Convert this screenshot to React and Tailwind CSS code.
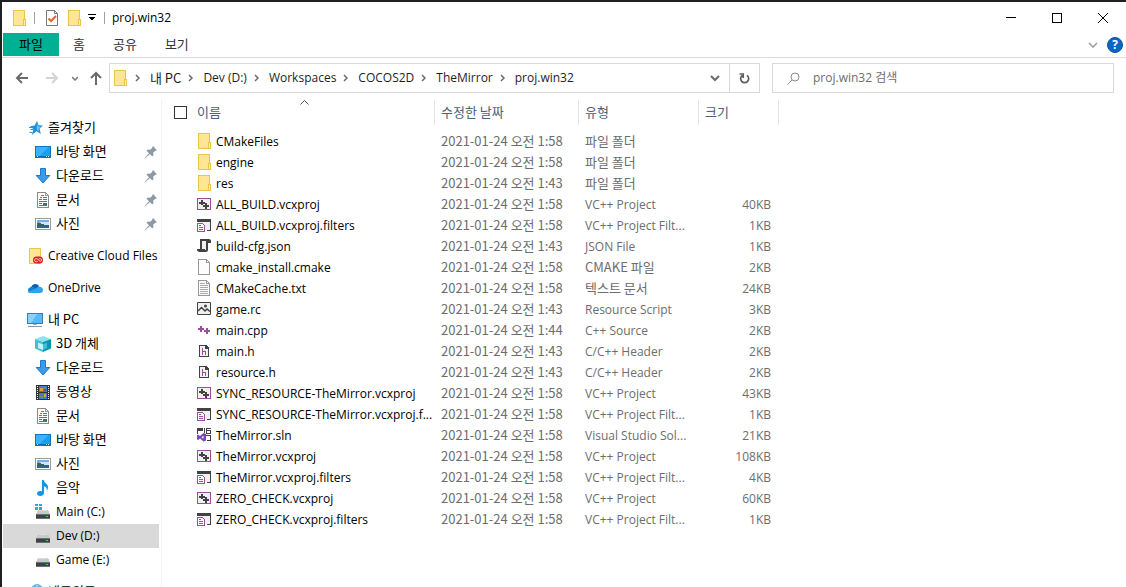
import { clsx } from "clsx";

const latin = "font-['Open_Sans','Noto_Sans_CJK_KR',sans-serif] text-xs";
const hangul = "font-['Noto_Sans_CJK_KR',sans-serif] text-[13px]";

const isHangul = (text) => /[가-힣]/.test(text);

// Korean labels are set one pixel larger than latin ones
const textFont = (text) => (isHangul(text) ? hangul : latin);

const Icon = ({ children, crisp = true, className = "size-4" }) => (
    <svg
        viewBox="0 0 16 16"
        fill="none"
        shapeRendering={crisp ? "crispEdges" : "auto"}
        className={clsx("shrink-0", className)}
        aria-hidden="true"
    >
        {children}
    </svg>
);

const Folder = () => (
    <Icon>
        <path fill="#ffe594" stroke="#e9c54a" d="M1.5.5h11v15h-11z" />
        <path fill="#ffeeb5" stroke="#e9c54a" d="M11.5 9.5h2v6h-2z" />
    </Icon>
);

const Star = () => (
    <Icon crisp={false}>
        <path fill="#1f8fe0" d="M10 1l1.600 4.300 4.400.2-3.400 3 1.200 5.500-4.200-2.700L4.800 15l1.700-5.700L3 6.200l4.700-.7z" />
        <path fill="#7cc4f5" d="M10 3.500l1 3 3 .2-2.400 1.700.7 2.800-2.500-1.600z" />
        <path stroke="#2b96e2" d="M2 7.500h4M3.500 9.500h3M2.500 12.500h3" />
    </Icon>
);

const Desktop = () => (
    <Icon>
        <path fill="#19a0f5" stroke="#0d74be" d="M.5 2.500h15v11H.5z" />
        <path fill="#3db1fb" d="M1 3h12L4 12H1z" />
        <path fill="#0b6fb8" d="M1 12h14v1H1z" />
        <path fill="#fff" d="M2 12h1v1H2zM11 12h1v1h-1zM13 12h1v1h-1z" />
    </Icon>
);

const Download = () => (
    <Icon crisp={false}>
        <path fill="#3b9be9" stroke="#2477c0" d="M5.500.5h5v7h4.300L8 15 1.200 7.500h4.300z" />
    </Icon>
);

const Document = () => (
    <Icon>
        <path fill="#fff" stroke="#8a8a8a" d="M2.500.5h8l3 3v12h-11z" />
        <path stroke="#9a9a9a" d="M10.500 1v2.500H13" />
        <path stroke="#2c7fc0" d="M6 3.500h3M5 5.500h2M8 5.500h4M4 7.500h3M8 7.500h4M4 9.500h8M4 11.500h3M4 13.500h8" />
        <path fill="#2f7d5b" d="M8 11h4v2H8z" />
    </Icon>
);

const Pictures = () => (
    <Icon>
        <path fill="#fff" stroke="#9b9b9b" d="M.5 2.500h15v11H.5z" />
        <path fill="#6cb4ea" d="M2 4h12v4H2z" />
        <path fill="#cfe6f6" d="M5 6h9v3H5z" />
        <path fill="#35664f" d="M2 7h4v1h3v1h5v1H2z" />
        <path fill="#27698f" d="M2 10h12v2H2z" />
    </Icon>
);

const CreativeCloud = () => (
    <Icon crisp={false}>
        <path fill="#ffe594" stroke="#e9c54a" d="M2.500.5h11v15h-11z" />
        <rect x="6" y="8.500" width="10" height="7" rx="3.500" fill="#da1f26" />
        <path stroke="#ffd9c7" d="M10.800 13.200c-1 1-3.200.8-3.200-.9s2-2.200 3.200-1l1.800 1.600c1 .8 2.200.2 2-.9-.2-1.400-2-1.800-3-.7" />
    </Icon>
);

const OneDrive = () => (
    <Icon crisp={false}>
        <path fill="#0f5fb4" d="M4 7.500a4.400 4.400 0 018-1.600l-2 3.600-6 1z" />
        <path fill="#1180d6" d="M3.400 7.200c1.600-.8 3-.4 4.200.3L12 13H3.300A2.950 2.950 0 013.400 7.200z" />
        <path fill="#2aa5ee" d="M11 6.800c3-.7 5 .9 5 3.200S14.600 13 13 13H3c-1 0-2-.5-2.400-1.200L8 9z" />
    </Icon>
);

const Computer = () => (
    <Icon>
        <path fill="#55baf8" stroke="#3f7ca8" d="M.5 1.500h15v10H.5z" />
        <path fill="#88d2fc" d="M1 2h9l-6 9H1z" />
        <path fill="#9eb2c0" d="M6 12h4v1H6z" />
        <path fill="#8495a3" d="M1 14h14v1H1z" />
    </Icon>
);

const Cube = () => (
    <Icon crisp={false}>
        <path fill="#8fe3ec" d="M8 0l8 3-8 3-8-3z" />
        <path fill="#3fc1d3" d="M0 3l8 3v10l-8-3.500z" />
        <path fill="#0e93b5" d="M16 3L8 6v10l8-3.500z" />
        <path fill="#c3f3f6" d="M3 6.500l5 2V14l-5-2z" />
        <path fill="#35c5dc" d="M8 8.500l4-2V12l-4 2z" />
    </Icon>
);

const Video = () => (
    <Icon>
        <path fill="#333" d="M1 1h14v15H1z" />
        <path stroke="#eee" strokeDasharray="1 1" d="M2.500 2v13M13.500 2v13" />
        <path fill="#4a76c9" d="M4 2h8v6H4zM4 9h8v6H4z" />
        <path fill="#d9a52c" d="M5 4h3v3H5zM9 10h2v3H9z" />
        <path fill="#5e9a4a" d="M8 3h3v2H8zM5 12h3v2H5z" />
        <path fill="#8b3f6c" d="M9 5h2v2H9z" />
    </Icon>
);

const Music = () => (
    <Icon crisp={false}>
        <path fill="#1593ea" d="M7 0h1.800c.3 3 4.200 3.700 4.200 7.200 0 1.500-.7 2.500-1.300 3.300.3-2.500-.9-3.800-2.700-4.200V13c0 1.700-1.700 3-3.700 3S2 15 2 13.500 3.500 11 5.200 11c.7 0 1.300.1 1.800.4z" />
    </Icon>
);

const Drive = ({ system }) => (
    <Icon>
        {system && <path fill="#17b0ef" d="M0 0h3v2H0zM4 0h3v2H4zM0 3h3v3H0zM4 3h3v3H4z" />}
        <path fill="#c8c9cb" d="M3 6h10l2 4H1z" />
        <path fill="#dedfe0" d="M4 6h8v1H4z" />
        <path fill="#3f4144" d="M1 10h14v5H1z" />
        <path fill="#6d6f72" d="M1 10h14v1H1zM1 14h14v1H1z" />
        <path fill="#33e04a" d="M11 12h2v1h-2z" />
    </Icon>
);

const Network = () => (
    <Icon crisp={false}>
        <circle cx="10" cy="6" r="6" fill="#69b4dc" />
        <path stroke="#bfe3f3" d="M5 4h9M10 1v9" />
        <path fill="#3f9bd6" d="M0 7h9v7H0z" />
    </Icon>
);

const Pin = () => (
    <Icon crisp={false} className="size-3">
        <path fill="#8d99a3" d="M10.500 0L16 5.500l-1.500.9-.8-.2-2.800 2.900.3 3.300L9.700 14 6.500 10.800 1 15.500l-1 .5.500-1L5.200 9.500 2 6.300l1.600-1.500 3.300.3 2.900-2.800-.2-.8z" />
    </Icon>
);

const Project = () => (
    <Icon>
        <path fill="#f1eff2" stroke="#9b4f96" d="M.5 2.500h13v11H.5z" />
        <path fill="#424242" d="M4 4h2v2h2v2H6v1H4V8H2V6h2z" />
        <path fill="#424242" d="M8 7h2v2h2v2h-2v2H8v-2H6V9h2z" />
    </Icon>
);

const Filters = () => (
    <Icon>
        <path fill="#f1eff2" d="M1 5h12v8H1z" />
        <path fill="#424242" d="M0 2h14v12h-4v-1h3V5H0z" />
        <path fill="#fff" stroke="#9b4f96" d="M.5 6.500h5l2 2v6h-7z" />
        <path stroke="#9b4f96" d="M2 8.500h2M2 10.500h4M2 12.500h4" />
    </Icon>
);

const Json = () => (
    <Icon crisp={false}>
        <path fill="#f1eff2" d="M5 3h5v9H5z" />
        <path fill="#424242" d="M3 1h9c1.500 0 2 1 2 2v2h-3v6.500C11 13.300 10 14 9 14H2.500C1 14 0 13 0 11.500V11h3V3.500C3 2.500 3 2 3 1zM5 3v8h3v1h1V3z" fillRule="evenodd" />
    </Icon>
);

const Page = ({ lines }) => (
    <Icon>
        <path fill="#fdfdfd" stroke="#979797" d="M1.500.5h8l3 3v12h-11z" />
        <path stroke="#979797" d="M9.500 1v2.500H12" />
        {lines && <path stroke="#a9a9a9" d="M3 3.500h5M3 5.500h8M3 7.500h8M3 9.500h8M3 11.500h8M3 13.500h8" />}
    </Icon>
);

const Resource = () => (
    <Icon crisp={false}>
        <path fill="#f1eff2" stroke="#424242" d="M.5 1.500h13v12H.5z" />
        <path stroke="#424242" strokeWidth="1.500" d="M1 10l3.500-3.500L8 10l2-2 3 2.500" />
        <circle cx="8.500" cy="5" r="1.500" fill="#424242" />
    </Icon>
);

const Source = () => (
    <Icon>
        <path fill="#9b4f96" d="M3 4h2v2h2v2H5v2H3V8H1V6h2zM9 6h2v2h2v2h-2v2H9v-2H7V8h2z" />
    </Icon>
);

const Header = () => (
    <Icon>
        <path fill="#f1eff2" d="M3 3h8v11H3z" />
        <path fill="#424242" d="M2 2h7l3 3v9H2zM3 3v10h8V6H8V3z" fillRule="evenodd" />
        <path stroke="#9b4f96" d="M5.500 5v7M5 8.500h3.500V12" />
    </Icon>
);

const Solution = () => (
    <Icon>
        <path fill="#424242" d="M0 1h6v3H1v3H0zM7 1h1v5H7zM9 1h5v1h-4v1h4v4H9zM10 5v1h3V4h-3zM9 8h5v6h-4v-1h3V9H9z" fillRule="evenodd" />
        <path shapeRendering="auto" fill="#7b45c2" fillRule="evenodd" d="M6.500 6L9 7v6.500L6.500 14.500 3 11.500l-2 1.500-1-.6V8.200L1 7.500 3 9zM6.500 8.800L4.500 10.300l2 1.500z" />
    </Icon>
);

const favorites = [
    { label: "즐겨찾기", icon: <Star />, root: true },
    { label: "바탕 화면", icon: <Desktop />, pinned: true },
    { label: "다운로드", icon: <Download />, pinned: true },
    { label: "문서", icon: <Document />, pinned: true },
    { label: "사진", icon: <Pictures />, pinned: true },
];

const computer = [
    { label: "내 PC", icon: <Computer />, root: true },
    { label: "3D 개체", icon: <Cube /> },
    { label: "다운로드", icon: <Download /> },
    { label: "동영상", icon: <Video /> },
    { label: "문서", icon: <Document /> },
    { label: "바탕 화면", icon: <Desktop /> },
    { label: "사진", icon: <Pictures /> },
    { label: "음악", icon: <Music /> },
    { label: "Main (C:)", icon: <Drive system /> },
    { label: "Dev (D:)", icon: <Drive />, selected: true },
    { label: "Game (E:)", icon: <Drive /> },
];

const groups = [
    favorites,
    [{ label: "Creative Cloud Files", icon: <CreativeCloud />, root: true }],
    [{ label: "OneDrive", icon: <OneDrive />, root: true }],
    computer,
    [{ label: "네트워크", icon: <Network />, root: true }],
];

const files = [
    ["CMakeFiles", "1:58", "파일 폴더", "", <Folder />],
    ["engine", "1:58", "파일 폴더", "", <Folder />],
    ["res", "1:43", "파일 폴더", "", <Folder />],
    ["ALL_BUILD.vcxproj", "1:58", "VC++ Project", "40KB", <Project />],
    ["ALL_BUILD.vcxproj.filters", "1:58", "VC++ Project Filt...", "1KB", <Filters />],
    ["build-cfg.json", "1:43", "JSON File", "1KB", <Json />],
    ["cmake_install.cmake", "1:58", "CMAKE 파일", "2KB", <Page />],
    ["CMakeCache.txt", "1:58", "텍스트 문서", "24KB", <Page lines />],
    ["game.rc", "1:43", "Resource Script", "3KB", <Resource />],
    ["main.cpp", "1:44", "C++ Source", "2KB", <Source />],
    ["main.h", "1:43", "C/C++ Header", "2KB", <Header />],
    ["resource.h", "1:43", "C/C++ Header", "2KB", <Header />],
    ["SYNC_RESOURCE-TheMirror.vcxproj", "1:58", "VC++ Project", "43KB", <Project />],
    ["SYNC_RESOURCE-TheMirror.vcxproj.f...", "1:58", "VC++ Project Filt...", "1KB", <Filters />],
    ["TheMirror.sln", "1:58", "Visual Studio Sol...", "21KB", <Solution />],
    ["TheMirror.vcxproj", "1:58", "VC++ Project", "108KB", <Project />],
    ["TheMirror.vcxproj.filters", "1:58", "VC++ Project Filt...", "4KB", <Filters />],
    ["ZERO_CHECK.vcxproj", "1:58", "VC++ Project", "60KB", <Project />],
    ["ZERO_CHECK.vcxproj.filters", "1:58", "VC++ Project Filt...", "1KB", <Filters />],
];

const path = ["내 PC", "Dev (D:)", "Workspaces", "COCOS2D", "TheMirror", "proj.win32"];

const TitleBar = () => (
    <header className="h-[31px] flex items-center pl-[10px]">
        <Folder />
        <span className="w-px h-3 ml-[6px] bg-gray-400" />
        <button aria-label="속성" className="ml-[9px]">
            <Icon crisp={false}>
                <path fill="#fff" stroke="#777" d="M2.500.5h8l3 3v12h-11z" />
                <path stroke="#777" d="M10.500.5v3h3" />
                <path stroke="#e8622c" strokeWidth="2" d="M4.500 8.500L7 11l5-5" />
            </Icon>
        </button>
        <button aria-label="새 폴더" className="ml-[7px]">
            <Folder />
        </button>
        <button aria-label="빠른 실행 도구 모음 사용자 지정" className="ml-[5px]">
            <svg viewBox="0 0 8 7" className="w-[8px] h-[7px]" shapeRendering="crispEdges">
                <path d="M0 0h8v1H0zM1 3h6v1H6v1H5v1H3V5H2V4H1z" />
            </svg>
        </button>
        <span className="w-px h-3 ml-2 bg-gray-400" />
        <h1 className={clsx(latin, "ml-[7px] text-black")}>proj.win32</h1>

        <div className="ml-auto flex h-full">
            <button aria-label="최소화" className="w-[46px] flex justify-center items-center">
                <span className="w-[10px] h-px bg-black" />
            </button>
            <button aria-label="최대화" className="w-[46px] flex justify-center items-center">
                <span className="size-[10px] border border-black" />
            </button>
            <button aria-label="닫기" className="w-[46px] flex justify-center items-center">
                <svg viewBox="0 0 10 10" className="size-[10px]" stroke="#000">
                    <path d="M0 0l10 10M10 0L0 10" />
                </svg>
            </button>
        </div>
    </header>
);

const Ribbon = () => (
    <nav className={clsx(hangul, "flex items-center pb-px pl-px border-b border-[#dadbdc] text-[#333]")}>
        <div className="flex *:pb-[2px] leading-[21px]">
            <button className="w-14 bg-[#00b092] text-black">파일</button>
            <button className="px-[14px]">홈</button>
            <button className="px-[14px]">공유</button>
            <button className="px-[14px]">보기</button>
        </div>
        <div className="ml-auto flex items-center gap-[9px] pr-[3px]">
            <button aria-label="리본 확장">
                <svg viewBox="0 0 10 6" className="w-[10px] h-[6px]" fill="none" stroke="#9a9a9a" strokeWidth="1.500">
                    <path d="M1 1l4 4 4-4" />
                </svg>
            </button>
            <button
                aria-label="도움말"
                className="size-4 rounded-full bg-[#0a66c2] border border-[#0b559f] font-['Open_Sans',sans-serif] text-xs leading-[14px] font-bold text-white"
            >
                ?
            </button>
        </div>
    </nav>
);

const AddressBar = () => (
    <div className="flex items-center py-[5px] px-3 text-[#1e1e1e]">
        <div className="w-[95px] flex items-center">
            <button aria-label="뒤로">
                <Icon crisp={false}>
                    <path stroke="#6b6b6b" strokeWidth="2" d="M14 8H3M8 3L3 8l5 5" />
                </Icon>
            </button>
            <button aria-label="앞으로" className="ml-[14px]">
                <Icon crisp={false}>
                    <path stroke="#d3d3d3" strokeWidth="2" d="M2 8h11M8 3l5 5-5 5" />
                </Icon>
            </button>
            <button aria-label="최근 위치" className="ml-3">
                <svg viewBox="0 0 6 5" className="w-[6px] h-[5px]" fill="none" stroke="#777" strokeWidth="1.500">
                    <path d="M0 1l3 3 3-3" />
                </svg>
            </button>
            <button aria-label="위로" className="ml-[10px]">
                <Icon crisp={false}>
                    <path stroke="#6b6b6b" strokeWidth="2" d="M8 15V3M3 8l5-5 5 5" />
                </Icon>
            </button>
        </div>

        <div className="flex-1 h-[30px] flex items-center border border-[#d9d9d9] pl-[3px]">
            <Folder />
            {path.map((name) => (
                <div key={name} className="flex items-center mr-px">
                    <svg viewBox="0 0 5 8" className="ml-[6px] mr-[10px] w-[5px] h-[8px]" fill="none" stroke="#6b6b6b" strokeWidth="1.500">
                        <path d="M1 1l3 3-3 3" />
                    </svg>
                    <button className={clsx(textFont(name), "leading-4")}>{name}</button>
                </div>
            ))}
            <button aria-label="이전 위치" className="ml-auto w-[29px] flex justify-center">
                <svg viewBox="0 0 10 7" className="w-[10px] h-[7px]" fill="none" stroke="#6b6b6b" strokeWidth="2">
                    <path d="M1 1l4 4 4-4" />
                </svg>
            </button>
            <button aria-label="새로 고침" className="w-[30px] h-full flex justify-center items-center border-l border-[#d9d9d9]">
                <svg viewBox="0 0 11 11" className="size-[11px]" fill="none" stroke="#5f5f5f" strokeWidth="1.700">
                    <path d="M8 2.400a4 4 0 11-4.700 0M4.200 5V1H.5" />
                </svg>
            </button>
        </div>

        <label className="w-[342px] h-[30px] ml-3 flex items-center gap-[13px] border border-[#d9d9d9] pl-[14px]">
            <svg viewBox="0 0 13 13" className="size-[13px] shrink-0" fill="none" stroke="#8a8a8a">
                <circle cx="8" cy="5" r="4" />
                <path d="M5 8l-4.500 4.500" />
            </svg>
            <input
                type="search"
                aria-label="검색"
                placeholder="proj.win32 검색"
                className="min-w-0 flex-1 bg-transparent font-['Open_Sans','Noto_Sans_CJK_KR',sans-serif] text-xs placeholder:text-[#6d6d6d] outline-none"
            />
        </label>
    </div>
);

const Sidebar = () => (
    <aside className="w-40 shrink-0 mt-[2px] pt-4 pl-px pr-[2px] flex flex-col gap-2 border-r border-[#f2f2f2] overflow-hidden">
        {groups.map((items) => (
            <ul key={items[0].label} className="shrink-0">
                {items.map(({ label, icon, root, pinned, selected }) => (
                    <li key={label}>
                        <a
                            href="#"
                            className={clsx(
                                "h-6 flex items-center gap-[5px] pr-[2px] text-black whitespace-nowrap",
                                root ? "pl-6" : "pl-8",
                                selected && "bg-[#d9d9d9]",
                            )}
                        >
                            {icon}
                            <span className={clsx(textFont(label), "flex-1", isHangul(label) ? "leading-[22px] pb-[2px]" : "leading-6")}>
                                {label}
                            </span>
                            {pinned && <Pin />}
                        </a>
                    </li>
                ))}
            </ul>
        ))}
    </aside>
);

const FileList = () => (
    <main className="flex-1 min-w-0 pt-[2px] overflow-hidden">
        <table className="table-fixed border-separate border-spacing-0 w-[617px] text-left whitespace-nowrap">
            <colgroup>
                <col className="w-[273px]" />
                <col className="w-[144px]" />
                <col className="w-[120px]" />
                <col className="w-20" />
            </colgroup>
            <thead className={clsx(hangul, "text-[#4c607a]")}>
                <tr className="h-[25px] *:font-normal *:p-0 *:align-top *:leading-[23px] *:border-r *:border-[#e5e5e5]">
                    <th className="relative">
                        <div className="flex items-center gap-[10px] pl-3">
                            <input
                                type="checkbox"
                                aria-label="모두 선택"
                                className="appearance-none size-[13px] mt-[2px] border border-[#333] bg-white"
                            />
                            이름
                        </div>
                        <svg
                            viewBox="0 0 9 5"
                            className="absolute top-0 left-[138px] w-[9px] h-[5px]"
                            fill="none"
                            stroke="#555"
                        >
                            <path d="M.5 4.500l4-4 4 4" />
                        </svg>
                    </th>
                    <th><span className="pl-[6px]">수정한 날짜</span></th>
                    <th><span className="pl-[6px]">유형</span></th>
                    <th><span className="pl-[6px]">크기</span></th>
                </tr>
            </thead>
            <tbody className="text-[#6d6d6d] before:block before:h-[6px]">
                {files.map(([name, time, type, size, icon]) => (
                    <tr key={name} className="h-[21px] *:p-0 *:align-top">
                        <td>
                            <div className="h-[21px] flex items-center gap-[3px] pl-[35px]">
                                <span className="pb-px">{icon}</span>
                                <span className={clsx(latin, "text-black leading-[21px]")}>{name}</span>
                            </div>
                        </td>
                        <td className={clsx(hangul, "leading-[19px]")}>
                            <span className="pl-[6px]">2021-01-24 오전 {time}</span>
                        </td>
                        <td className={clsx(textFont(type), isHangul(type) ? "leading-[19px]" : "leading-[21px]")}>
                            <span className="pl-[6px]">{type}</span>
                        </td>
                        <td className={clsx(latin, "text-right leading-[21px]")}>
                            <span className="pr-2">{size}</span>
                        </td>
                    </tr>
                ))}
            </tbody>
        </table>
    </main>
);

export default function App() {
    return (
        <div className="h-screen flex flex-col bg-white border-t-2 border-l-2 border-[#202020] overflow-hidden">
            <TitleBar />
            <Ribbon />
            <AddressBar />
            <div className="flex-1 min-h-0 flex">
                <Sidebar />
                <FileList />
            </div>
        </div>
    );
}
